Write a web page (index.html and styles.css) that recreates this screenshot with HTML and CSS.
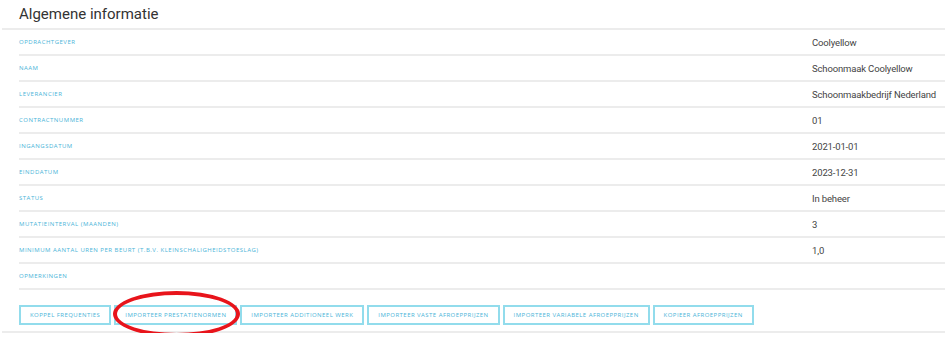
FILE: index.html
```html
<!DOCTYPE html>
<html lang="nl">
<head>
    <meta charset="UTF-8">
    <meta name="viewport" content="width=device-width, initial-scale=1.0">
    <title>Algemene informatie</title>
    <link rel="stylesheet" href="styles.css">
</head>
<body>
    <div class="panel">
        <div class="panel-header">
            <h2>Algemene informatie</h2>
        </div>

        <div class="info-list">
            <div class="info-row"><span class="label">Opdrachtgever</span><span class="value">Coolyellow</span></div>
            <div class="info-row"><span class="label">Naam</span><span class="value">Schoonmaak Coolyellow</span></div>
            <div class="info-row"><span class="label">Leverancier</span><span class="value">Schoonmaakbedrijf Nederland</span></div>
            <div class="info-row"><span class="label">Contractnummer</span><span class="value">01</span></div>
            <div class="info-row"><span class="label">Ingangsdatum</span><span class="value">2021-01-01</span></div>
            <div class="info-row"><span class="label">Einddatum</span><span class="value">2023-12-31</span></div>
            <div class="info-row"><span class="label">Status</span><span class="value">In beheer</span></div>
            <div class="info-row"><span class="label">Mutatieinterval (maanden)</span><span class="value">3</span></div>
            <div class="info-row"><span class="label">Minimum aantal uren per beurt (t.b.v. kleinschaligheidstoeslag)</span><span class="value">1,0</span></div>
            <div class="info-row"><span class="label">Opmerkingen</span><span class="value"></span></div>
        </div>

        <div class="button-container">
            <button>Koppel frequenties</button>
            <button class="marked">Importeer prestatienormen</button>
            <button>Importeer additioneel werk</button>
            <button>Importeer vaste afroepprijzen</button>
            <button>Importeer variabele afroepprijzen</button>
            <button>Kopieer afroepprijzen</button>
        </div>
    </div>
</body>
</html>
```

FILE: styles.css
```css
body {
    font-family: Roboto, "Liberation Sans", sans-serif;
    margin: 0;
    background-color: #ffffff;
    color: #444444;
}
.panel {
    padding-left: 2px;
}
.panel-header {
    height: 28px;
    border-bottom: 2px solid #ececec;
    padding-left: 17px;
}
.panel-header h2 {
    margin: 0;
    padding-top: 5px;
    font-size: 15px;
    font-weight: 400;
    color: #333333;
}
.info-list {
    margin-left: 17px;
}
.info-row {
    display: flex;
    align-items: center;
    height: 24px;
    border-bottom: 2px solid #ececec;
}
.label {
    flex: 1;
    font-family: "Open Sans", sans-serif;
    font-size: 6px;
    letter-spacing: 0.5px;
    text-transform: uppercase;
    color: #4ab4d8;
}
.value {
    width: 133px;
    font-size: 9.5px;
    letter-spacing: -0.15px;
    white-space: nowrap;
    color: #444444;
}
.button-container {
    display: flex;
    gap: 3px;
    padding: 15px 0 6px 17px;
    border-bottom: 2px solid #ececec;
}
button {
    position: relative;
    height: 20px;
    padding: 0 9px;
    background-color: #ffffff;
    border: 2px solid #92dcec;
    border-radius: 0;
    font-family: "Open Sans", sans-serif;
    font-size: 6px;
    letter-spacing: 0.45px;
    text-transform: uppercase;
    color: #4ab4d8;
    white-space: nowrap;
    cursor: pointer;
}
button.marked::after {
    content: "";
    position: absolute;
    left: -3px;
    top: -16px;
    width: 119px;
    height: 38px;
    border: 4px solid #e8141b;
    border-radius: 50%;
}
```
